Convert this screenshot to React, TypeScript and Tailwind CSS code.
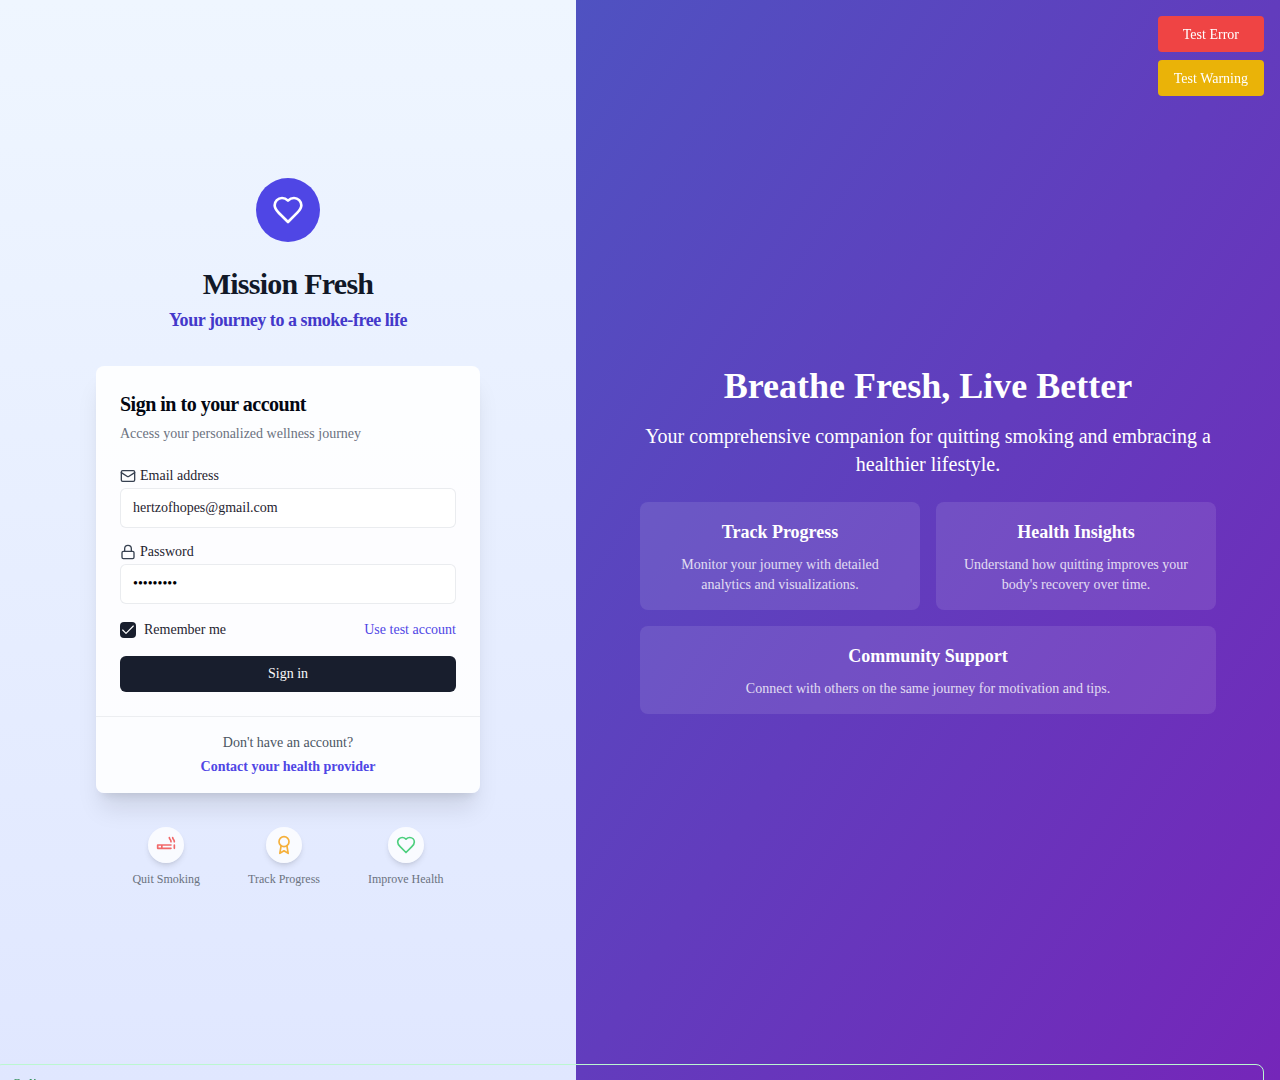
import React from "react";
import { Check, Lock, Mail } from "lucide-react";

function Icon({ className, children }: { className: string; children: React.ReactNode }) {
  return (
    <svg
      className={className}
      viewBox="0 0 24 24"
      fill="none"
      stroke="currentColor"
      strokeWidth="2"
      strokeLinecap="round"
      strokeLinejoin="round"
    >
      {children}
    </svg>
  );
}

function HeartIcon({ className }: { className: string }) {
  return (
    <Icon className={className}>
      <path d="M19 14c1.49-1.46 3-3.21 3-5.5A5.5 5.5 0 0 0 16.5 3c-1.76 0-3 .5-4.5 2-1.5-1.5-2.74-2-4.5-2A5.5 5.5 0 0 0 2 8.5c0 2.3 1.5 4.05 3 5.5l7 7Z" />
    </Icon>
  );
}

const features = [
  {
    label: "Quit Smoking",
    icon: (
      <Icon className="size-5 text-[#ef4444]">
        <path d="M18 12H2v4h16M22 12v4M7 12v4M18 8c0-2.5-2-2.5-2-5M22 8c0-2.5-2-2.5-2-5" />
      </Icon>
    ),
  },
  {
    label: "Track Progress",
    icon: (
      <Icon className="size-5 text-[#f59e0b]">
        <circle cx="12" cy="8" r="6" />
        <path d="M15.477 12.89 17 22l-5-3-5 3 1.523-9.11" />
      </Icon>
    ),
  },
  { label: "Improve Health", icon: <HeartIcon className="size-5 text-[#22c55e]" /> },
];

function SignInCard() {
  return (
    <div className="mt-8 w-96 rounded-lg bg-white/90 shadow-xl">
      <div className="p-6">
        <h3 className="text-xl font-semibold tracking-tight text-[#030712]">Sign in to your account</h3>
        <p className="mt-1.5 text-sm text-[#6b7280]">Access your personalized wellness journey</p>
      </div>
      <form className="flex flex-col gap-4 px-6 pb-6 text-sm text-[#1f2430]">
        <div>
          <label className="mb-1 flex h-4 items-center gap-1 leading-4">
            <Mail className="size-4 text-[#374151]" />
            Email address
          </label>
          <input
            className="block h-10 w-full rounded-md border border-[#e5e7eb]/80 bg-white px-3 text-sm"
            defaultValue="hertzofhopes@gmail.com"
          />
        </div>
        <div>
          <label className="mb-1 flex h-4 items-center gap-1 leading-4">
            <Lock className="size-4 text-[#374151]" />
            Password
          </label>
          <input
            type="password"
            className="block h-10 w-full rounded-md border border-[#e5e7eb]/80 bg-white px-3 text-sm text-black"
            defaultValue="password1"
          />
        </div>
        <div className="flex h-5 items-center justify-between">
          <div className="flex items-center gap-2">
            <span className="flex size-4 items-center justify-center rounded bg-[#181e2d] text-white">
              <Check className="size-4" strokeWidth={1.7} />
            </span>
            Remember me
          </div>
          <button type="button" className="text-[#4f46e5]">Use test account</button>
        </div>
        <button type="button" className="h-9 rounded-md bg-[#181e2d] text-gray-50">Sign in</button>
      </form>
      <div className="flex flex-col items-center gap-1 border-t border-[#e5e7eb]/70 py-4 text-sm">
        <p className="text-[#4b5563]">Don't have an account?</p>
        <a className="font-semibold text-[#4f46e5]">Contact your health provider</a>
      </div>
    </div>
  );
}

function FeatureCard({ title, text, wide }: { title: string; text: string; wide?: boolean }) {
  return (
    <div className={wide ? "col-span-2 rounded-lg bg-white/10 px-4 pt-4 pb-[15px]" : "rounded-lg bg-white/10 px-4 pt-4 pb-[15px]"}>
      <h3 className="text-lg font-semibold">{title}</h3>
      <p className="mt-[9px] text-sm opacity-80">{text}</p>
    </div>
  );
}

export default function App() {
  return (
    <div className="flex h-[1080px] w-[1280px] overflow-hidden font-['Liberation_Serif',serif] antialiased">
      <div className="flex w-[576px] flex-col items-center bg-linear-to-b/srgb from-[#eff6ff] to-[#e0e7ff] pt-[178.4px]">
        <div className="flex size-16 shrink-0 items-center justify-center rounded-full bg-[#4f46e5] text-white">
          <HeartIcon className="size-8" />
        </div>
        <h1 className="mt-6 text-3xl font-bold tracking-tight text-[#111827]">Mission Fresh</h1>
        <p className="mt-1 text-lg font-semibold tracking-tight text-[#4338ca]">Your journey to a smoke-free life</p>
        <SignInCard />
        <div className="mt-[34px] flex gap-12">
          {features.map((f) => (
            <div key={f.label} className="flex flex-col items-center gap-2">
              <div className="rounded-full bg-white/80 p-2 shadow-md">
                <div className="opacity-80">{f.icon}</div>
              </div>
              <span className="text-xs text-[#6b7280]">{f.label}</span>
            </div>
          ))}
        </div>
      </div>

      <div className="flex w-[704px] flex-col justify-center bg-linear-to-br/srgb from-[#4f52c1] to-[#7526b9] px-16 text-center text-white">
        <h2 className="text-4xl font-bold">Breathe Fresh, Live Better</h2>
        <p className="mt-4 text-xl">Your comprehensive companion for quitting smoking and embracing a healthier lifestyle.</p>
        <div className="mt-6 grid grid-cols-2 gap-4">
          <FeatureCard title="Track Progress" text="Monitor your journey with detailed analytics and visualizations." />
          <FeatureCard title="Health Insights" text="Understand how quitting improves your body's recovery over time." />
          <FeatureCard wide title="Community Support" text="Connect with others on the same journey for motivation and tips." />
        </div>
      </div>

      <div className="fixed top-4 right-4 flex flex-col gap-2 text-sm text-white">
        <button className="h-9 rounded bg-[#ef4444] px-4 pt-px">Test Error</button>
        <button className="h-9 rounded bg-[#eab308] px-4 pt-px">Test Warning</button>
      </div>

      <div className="fixed top-[1064px] right-4 h-12 w-[1270px] rounded-lg border border-[#bbf7d0] py-2.5 pl-[17px] text-sm text-[#15803d]">
        Online
      </div>
    </div>
  );
}
